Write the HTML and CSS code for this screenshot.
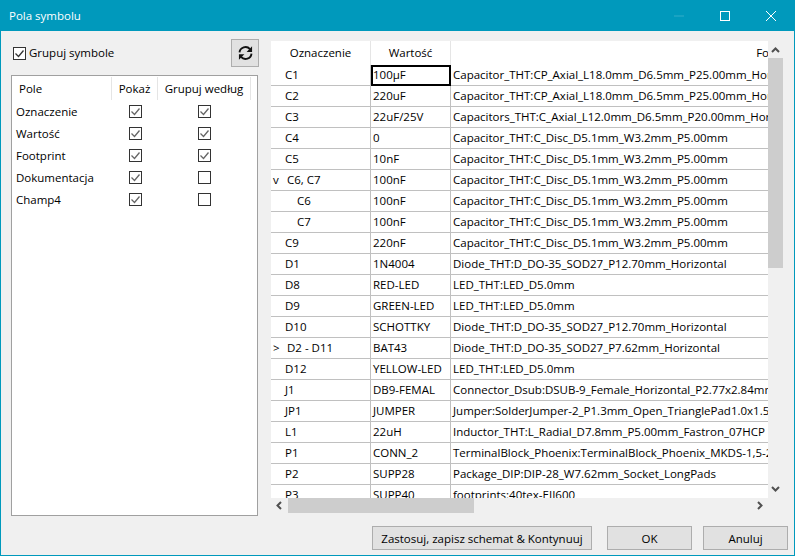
FILE: index.html
```html
<!DOCTYPE html>
<html lang="pl">
<head>
  <meta charset="UTF-8">
  <meta name="viewport" content="width=device-width, initial-scale=1.0">
  <title>Pola symbolu</title>
  <link rel="stylesheet" href="styles.css">
</head>
<body>
  <div class="window">
    <div class="titlebar">
      <span class="title">Pola symbolu</span>
      <div class="win-buttons">
        <svg class="win-btn" width="46" height="30" viewBox="0 0 46 30"><path d="M18 15h10" stroke="#33adc9" fill="none"/></svg>
        <svg class="win-btn" width="46" height="30" viewBox="0 0 46 30"><rect x="18.5" y="10.5" width="9" height="9" stroke="#fff" fill="none"/></svg>
        <svg class="win-btn" width="46" height="30" viewBox="0 0 46 30"><path d="M18 10l10 10M28 10l-10 10" stroke="#fff" fill="none"/></svg>
      </div>
    </div>

    <div class="content">
      <div class="main">
        <div class="left">
          <div class="left-top">
            <label class="group-check"><span class="check dark checked"></span><span class="group-text">Grupuj symbole</span></label>
            <button class="refresh" aria-label="Odśwież">
              <svg width="15" height="16" viewBox="0 0 16 16">
                <path d="M1.6 7.4A6.4 6.4 0 0 1 12.8 3.8" stroke="#111" stroke-width="2" fill="none"/>
                <path d="M15 .8v6H9.2z" fill="#111"/>
                <path d="M14.4 8.6A6.4 6.4 0 0 1 3.2 12.2" stroke="#111" stroke-width="2" fill="none"/>
                <path d="M1 15.2v-6h5.8z" fill="#111"/>
              </svg>
            </button>
          </div>
          <div class="fields">
            <div class="fields-head">
              <span class="f-name">Pole</span>
              <span class="f-show">Pokaż</span>
              <span class="f-group">Grupuj według</span>
            </div>
            <div class="field-row"><span class="f-label">Oznaczenie</span><span class="f-cell"><span class="check checked"></span></span><span class="f-cell wide"><span class="check checked"></span></span></div>
            <div class="field-row"><span class="f-label">Wartość</span><span class="f-cell"><span class="check checked"></span></span><span class="f-cell wide"><span class="check checked"></span></span></div>
            <div class="field-row"><span class="f-label">Footprint</span><span class="f-cell"><span class="check checked"></span></span><span class="f-cell wide"><span class="check checked"></span></span></div>
            <div class="field-row"><span class="f-label">Dokumentacja</span><span class="f-cell"><span class="check checked"></span></span><span class="f-cell wide"><span class="check"></span></span></div>
            <div class="field-row"><span class="f-label">Champ4</span><span class="f-cell"><span class="check checked"></span></span><span class="f-cell wide"><span class="check"></span></span></div>
          </div>
        </div>

        <div class="right">
          <div class="grid-view">
            <div class="grid-head">
              <div class="h-ref">Oznaczenie</div>
              <div class="h-val">Wartość</div>
              <div class="h-fp">Footprint</div>
            </div>
            <div class="row"><div class="ref">C1</div><div class="val selected">100µF</div><div class="fp">Capacitor_THT:CP_Axial_L18.0mm_D6.5mm_P25.00mm_Horizontal</div></div>
            <div class="row"><div class="ref">C2</div><div class="val">220uF</div><div class="fp">Capacitor_THT:CP_Axial_L18.0mm_D6.5mm_P25.00mm_Horizontal</div></div>
            <div class="row"><div class="ref">C3</div><div class="val">22uF/25V</div><div class="fp">Capacitors_THT:C_Axial_L12.0mm_D6.5mm_P20.00mm_Horizontal</div></div>
            <div class="row"><div class="ref">C4</div><div class="val">0</div><div class="fp">Capacitor_THT:C_Disc_D5.1mm_W3.2mm_P5.00mm</div></div>
            <div class="row"><div class="ref">C5</div><div class="val">10nF</div><div class="fp">Capacitor_THT:C_Disc_D5.1mm_W3.2mm_P5.00mm</div></div>
            <div class="row"><div class="ref"><span class="tree">v</span>C6, C7</div><div class="val">100nF</div><div class="fp">Capacitor_THT:C_Disc_D5.1mm_W3.2mm_P5.00mm</div></div>
            <div class="row"><div class="ref child">C6</div><div class="val">100nF</div><div class="fp">Capacitor_THT:C_Disc_D5.1mm_W3.2mm_P5.00mm</div></div>
            <div class="row"><div class="ref child">C7</div><div class="val">100nF</div><div class="fp">Capacitor_THT:C_Disc_D5.1mm_W3.2mm_P5.00mm</div></div>
            <div class="row"><div class="ref">C9</div><div class="val">220nF</div><div class="fp">Capacitor_THT:C_Disc_D5.1mm_W3.2mm_P5.00mm</div></div>
            <div class="row"><div class="ref">D1</div><div class="val">1N4004</div><div class="fp">Diode_THT:D_DO-35_SOD27_P12.70mm_Horizontal</div></div>
            <div class="row"><div class="ref">D8</div><div class="val">RED-LED</div><div class="fp">LED_THT:LED_D5.0mm</div></div>
            <div class="row"><div class="ref">D9</div><div class="val">GREEN-LED</div><div class="fp">LED_THT:LED_D5.0mm</div></div>
            <div class="row"><div class="ref">D10</div><div class="val">SCHOTTKY</div><div class="fp">Diode_THT:D_DO-35_SOD27_P12.70mm_Horizontal</div></div>
            <div class="row"><div class="ref"><span class="tree">&gt;</span>D2 - D11</div><div class="val">BAT43</div><div class="fp">Diode_THT:D_DO-35_SOD27_P7.62mm_Horizontal</div></div>
            <div class="row"><div class="ref">D12</div><div class="val">YELLOW-LED</div><div class="fp">LED_THT:LED_D5.0mm</div></div>
            <div class="row"><div class="ref">J1</div><div class="val">DB9-FEMAL</div><div class="fp">Connector_Dsub:DSUB-9_Female_Horizontal_P2.77x2.84mm</div></div>
            <div class="row"><div class="ref">JP1</div><div class="val">JUMPER</div><div class="fp">Jumper:SolderJumper-2_P1.3mm_Open_TrianglePad1.0x1.5mm</div></div>
            <div class="row"><div class="ref">L1</div><div class="val">22uH</div><div class="fp">Inductor_THT:L_Radial_D7.8mm_P5.00mm_Fastron_07HCP</div></div>
            <div class="row"><div class="ref">P1</div><div class="val">CONN_2</div><div class="fp">TerminalBlock_Phoenix:TerminalBlock_Phoenix_MKDS-1,5-2_1x02</div></div>
            <div class="row"><div class="ref">P2</div><div class="val">SUPP28</div><div class="fp">Package_DIP:DIP-28_W7.62mm_Socket_LongPads</div></div>
            <div class="row"><div class="ref">P3</div><div class="val">SUPP40</div><div class="fp">footprints:40tex-EII600</div></div>
          </div>
          <div class="vscroll">
            <svg class="arrow" width="15" height="17" viewBox="0 0 15 17"><path d="M4 11l3.5-3.5 3.5 3.5" stroke="#505050" stroke-width="2" fill="none"/></svg>
            <div class="v-thumb"></div>
            <svg class="arrow v-down" width="15" height="17" viewBox="0 0 15 17"><path d="M4 6l3.5 3.5 3.5-3.5" stroke="#505050" stroke-width="2" fill="none"/></svg>
          </div>
          <div class="hscroll">
            <svg class="arrow" width="17" height="15" viewBox="0 0 17 15"><path d="M10 4l-3.5 3.5 3.5 3.5" stroke="#505050" stroke-width="2" fill="none"/></svg>
            <div class="h-thumb"></div>
            <svg class="arrow h-right" width="17" height="15" viewBox="0 0 17 15"><path d="M7 4l3.5 3.5-3.5 3.5" stroke="#505050" stroke-width="2" fill="none"/></svg>
          </div>
        </div>
      </div>

      <div class="buttons">
        <button class="btn apply">Zastosuj, zapisz schemat &amp; Kontynuuj</button>
        <button class="btn ok">OK</button>
        <button class="btn cancel">Anuluj</button>
      </div>
    </div>
  </div>
</body>
</html>
```

FILE: styles.css
```css
* {
  box-sizing: border-box;
}
html, body {
  margin: 0;
  height: 100%;
}
body {
  font-family: 'Open Sans', 'Noto Sans', sans-serif;
  font-size: 11.5px;
  color: #000;
  background: #f0f0f0;
  overflow: hidden;
}
.window {
  width: 795px;
  height: 556px;
  display: flex;
  flex-direction: column;
  border: 1px solid #0099bc;
  border-top: none;
  background: #f0f0f0;
}
.titlebar {
  height: 31px;
  flex: none;
  display: flex;
  align-items: center;
  justify-content: space-between;
  background: #0099bc;
  color: #fff;
  padding-left: 8px;
}
.win-buttons {
  display: flex;
  height: 30px;
}
.win-btn {
  display: block;
}

.content {
  flex: 1;
  display: flex;
  flex-direction: column;
}
.main {
  flex: 1;
  display: flex;
}

/* left side */
.left {
  width: 270px;
  flex: none;
  padding: 8px 12px 0 10px;
}
.left-top {
  height: 28px;
  margin-bottom: 8px;
  display: flex;
  align-items: center;
  justify-content: space-between;
}
.group-check {
  display: flex;
  align-items: center;
  gap: 3px;
  margin-left: 2px;
}
.group-text {
  margin-top: -2px;
}
.refresh {
  width: 28px;
  height: 28px;
  padding: 0;
  display: flex;
  align-items: center;
  justify-content: center;
  background: #e1e1e1;
  border: 1px solid #adadad;
}
.fields {
  width: 247px;
  height: 441px;
  background: #fff;
  border: 1px solid #a0a0a0;
  padding-top: 1px;
}
.fields-head {
  height: 23px;
  display: flex;
  align-items: center;
  text-align: center;
}
.fields-head span {
  height: 23px;
  line-height: 23px;
  border-right: 1px solid #e5e5e5;
}
.f-name {
  width: 100px;
  text-align: left;
  padding-left: 7px;
}
.f-show {
  width: 46px;
}
.f-group {
  width: 93px;
}
.field-row {
  height: 22px;
  display: flex;
  align-items: center;
}
.f-label {
  width: 100px;
  padding-left: 4px;
}
.f-cell {
  width: 46px;
  display: flex;
  justify-content: center;
}
.f-cell.wide {
  width: 93px;
}
.check {
  display: block;
  width: 13px;
  height: 13px;
  border: 1px solid #333;
  background: #fff center no-repeat;
}
.check.checked {
  background-image: url("data:image/svg+xml,%3Csvg xmlns='http://www.w3.org/2000/svg' width='11' height='11'%3E%3Cpath d='M1.5 5.5l3 3 5-6' stroke='%23666' stroke-width='1.3' fill='none'/%3E%3C/svg%3E");
}
.check.dark.checked {
  background-image: url("data:image/svg+xml,%3Csvg xmlns='http://www.w3.org/2000/svg' width='11' height='11'%3E%3Cpath d='M1.5 5.5l3 3 5-6' stroke='%23333' stroke-width='1.3' fill='none'/%3E%3C/svg%3E");
}

/* table on the right */
.right {
  width: 512px;
  flex: none;
  margin-top: 10px;
  display: grid;
  grid-template-columns: 497px 15px;
  grid-template-rows: 457px 15px;
}
.grid-view {
  background: #fff;
  overflow: hidden;
}
.grid-head, .row {
  display: flex;
  width: 840px;
}
.grid-head {
  height: 24px;
  line-height: 24px;
  text-align: center;
}
.h-ref {
  width: 100px;
  border-right: 1px solid #e5e5e5;
}
.h-val {
  width: 80px;
  border-right: 1px solid #e5e5e5;
}
.h-fp {
  width: 660px;
}
.row {
  height: 21px;
  line-height: 20px;
  border-bottom: 1px solid #c0c0c0;
}
.ref, .val, .fp {
  height: 20px;
  white-space: nowrap;
  overflow: hidden;
}
.ref {
  width: 100px;
  padding-left: 14px;
  border-right: 1px solid #c0c0c0;
}
.ref.child {
  padding-left: 26px;
}
.tree {
  display: inline-block;
  width: 14px;
  margin-left: -12px;
  padding-right: 2px;
}
.val {
  width: 80px;
  padding-left: 2px;
  border-right: 1px solid #c0c0c0;
}
.val.selected {
  height: 21px;
  border: 2px solid #000;
  padding-left: 0;
  line-height: 15px;
}
.fp {
  width: 660px;
  padding-left: 2px;
}

.vscroll {
  display: flex;
  flex-direction: column;
  align-items: center;
  background: #f0f0f0;
}
.arrow {
  display: block;
  flex: none;
}
.v-thumb {
  width: 15px;
  height: 210px;
  background: #cdcdcd;
}
.v-down {
  margin-top: auto;
}
.hscroll {
  display: flex;
  align-items: center;
  background: #f0f0f0;
}
.h-thumb {
  width: 186px;
  height: 15px;
  background: #cdcdcd;
}
.h-right {
  margin-left: auto;
}

/* bottom buttons */
.buttons {
  height: 43px;
  flex: none;
  display: flex;
  gap: 11px;
  justify-content: flex-end;
  padding: 10px 6px 0 0;
}
.btn {
  height: 24px;
  padding: 0;
  font-family: inherit;
  font-size: 11.5px;
  color: #000;
  background: #e1e1e1;
  border: 1px solid #adadad;
}
.apply {
  width: 220px;
  margin-right: 4px;
}
.ok, .cancel {
  width: 85px;
}
```
